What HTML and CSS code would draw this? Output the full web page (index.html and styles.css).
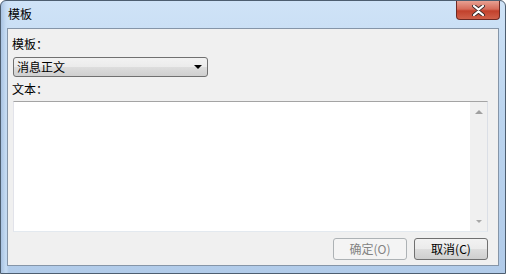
FILE: index.html
```html
<!DOCTYPE html>
<html lang="zh-CN">
<head>
  <meta charset="UTF-8" />
  <title>模板</title>
  <link rel="stylesheet" href="styles.css">
</head>
<body>
  <div class="window">
    <div class="titlebar">
      <span class="title">模板</span>
      <div class="close">
        <svg width="17" height="11" viewBox="0 0 17 11">
          <path d="M4 1 L8.5 4.5 L13 1 M4 10 L8.5 6.5 L13 10" fill="none" stroke="#3a2a2a" stroke-width="4" stroke-linecap="round"/>
          <path d="M4 1 L8.5 4.5 L13 1 M4 10 L8.5 6.5 L13 10" fill="none" stroke="#fff" stroke-width="2.2" stroke-linecap="round"/>
        </svg>
      </div>
    </div>
    <div class="client">
      <div class="label">模板：</div>
      <div class="combo">
        <span>消息正文</span>
        <span class="arrow"></span>
      </div>
      <div class="label">文本：</div>
      <div class="textbox">
        <div class="text"></div>
        <div class="vscroll">
          <span class="up"></span>
          <span class="down"></span>
        </div>
      </div>
      <div class="buttons">
        <button class="btn" disabled>确定(O)</button>
        <button class="btn">取消(C)</button>
      </div>
    </div>
  </div>
</body>
</html>
```

FILE: styles.css
```css
body { margin: 0; background: #fff; font-family: "Noto Sans CJK SC", "DejaVu Sans", sans-serif; font-size: 12px; color: #000; }
.window { width: 506px; height: 274px; box-sizing: border-box; border: 1px solid #4d5e70; border-radius: 6px 6px 0 0; background: linear-gradient(90deg, #a9c3e2 0px, #c6dcf3 5px, transparent 8px), linear-gradient(180deg, #cfe3f7 0%, #bcd5ef 40%, #b1cbe9 100%); display: flex; flex-direction: column; overflow: hidden; }
.titlebar { height: 27px; flex: none; display: flex; align-items: flex-start; justify-content: space-between; }
.title { margin: 5px 0 0 7px; font-size: 12px; line-height: 16px; color: #000; }
.close { width: 44px; height: 19px; margin-right: 5px; border: 1px solid #6d2a24; border-top: none; border-radius: 0 0 4px 4px; background: linear-gradient(180deg, #e8a092 0%, #d66c5a 45%, #c2412c 55%, #d0604a 100%); display: flex; align-items: center; justify-content: center; box-sizing: border-box; }
.client { flex: 1; margin: 0 6px 7px 6px; border: 1px solid #8595a8; background: #f0f0f0; padding: 8px 10px 0 4px; display: flex; flex-direction: column; }
.label { line-height: 14px; height: 15px; }
.combo { width: 195px; height: 20px; box-sizing: border-box; margin: 5px 0 5px 1px; border: 1px solid #707070; border-radius: 3px; background: linear-gradient(180deg, #f2f2f2 0%, #ebebeb 50%, #dddddd 51%, #cfcfcf 100%); display: flex; align-items: center; justify-content: space-between; padding: 0 5px 0 3px; line-height: 14px; }
.arrow { width: 0; height: 0; border-left: 4px solid transparent; border-right: 4px solid transparent; border-top: 4px solid #000; }
.textbox { margin: 4px 0 0 1px; height: 131px; box-sizing: border-box; border: 1px solid #abadb3; border-top-color: #a4a4a4; border-left-color: #e2e3ea; border-bottom-color: #e3e9ef; border-right-color: #dbdfe6; background: #fff; display: flex; }
.text { flex: 1; }
.vscroll { width: 17px; background: #f0f0f0; border-left: 1px solid #fff; display: flex; flex-direction: column; justify-content: space-between; align-items: center; padding: 8px 0 8px; }
.up { width: 0; height: 0; border-left: 4px solid transparent; border-right: 4px solid transparent; border-bottom: 4px solid #a0a0a0; }
.down { width: 0; height: 0; border-left: 3px solid transparent; border-right: 3px solid transparent; border-top: 3px solid #a8a8a8; }
.buttons { display: flex; justify-content: flex-end; gap: 7px; margin-top: 6px; }
.btn { width: 74px; height: 22px; font: inherit; line-height: 14px; padding: 0; border: 1px solid #707070; border-radius: 3px; background: linear-gradient(180deg, #f2f2f2 0%, #ebebeb 50%, #dddddd 51%, #cfcfcf 100%); color: #000; }
.btn:disabled { border-color: #adb2b5; background: #f4f4f4; color: #838383; }
```
